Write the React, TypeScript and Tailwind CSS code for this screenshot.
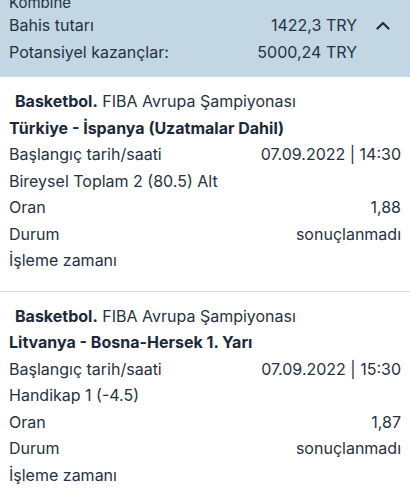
import React from 'react';

type Bet = {
  league: string;
  match: string;
  start: string;
  market: string;
  odds: string;
  status: string;
};

const bets: Bet[] = [
  {
    league: 'FIBA Avrupa Şampiyonası',
    match: 'Türkiye - İspanya (Uzatmalar Dahil)',
    start: '07.09.2022 | 14:30',
    market: 'Bireysel Toplam 2 (80.5) Alt',
    odds: '1,88',
    status: 'sonuçlanmadı',
  },
  {
    league: 'FIBA Avrupa Şampiyonası',
    match: 'Litvanya - Bosna-Hersek 1. Yarı',
    start: '07.09.2022 | 15:30',
    market: 'Handikap 1 (-4.5)',
    odds: '1,87',
    status: 'sonuçlanmadı',
  },
];

function Row({ label, value }: { label: string; value?: string }) {
  return (
    <div className="flex justify-between h-[26.5px] leading-[26.5px]">
      <span>{label}</span>
      {value && <span>{value}</span>}
    </div>
  );
}

function BetCard({ bet, first }: { bet: Bet; first?: boolean }) {
  return (
    <div className={first ? 'pt-[11px] pb-[17px] px-[9px] border-b border-[#d3dee6]' : 'pt-[11px] pb-4 px-[9px]'}>
      <div className="h-[26.5px] leading-[26.5px] pl-[6px]">
        <span className="font-bold text-[#1b2a3a]">Basketbol.</span> {bet.league}
      </div>
      <div className="h-[26.5px] leading-[26.5px] font-bold text-[#1b2a3a]">{bet.match}</div>
      <Row label="Başlangıç tarih/saati" value={bet.start} />
      <Row label={bet.market} />
      <Row label="Oran" value={bet.odds} />
      <Row label="Durum" value={bet.status} />
      <Row label="İşleme zamanı" />
    </div>
  );
}

export default function App() {
  return (
    <div className="w-[410px] h-[500px] overflow-hidden bg-white text-[16px] text-[#253241] font-['Inter',sans-serif]">
      {/* summary header */}
      <div className="bg-[#c3d6e3] h-[77px] px-[9px] pt-[12px]">
        <div className="-mt-[19px] h-[19px] leading-[19px] text-[15px]">Kombine</div>
        <div className="flex items-center h-[27px] leading-[27px]">
          <span className="flex-1">Bahis tutarı</span>
          <span className="w-[110px] text-right">1422,3 TRY</span>
          <svg className="ml-[19px] mr-[11px]" width="14" height="9" viewBox="0 0 14 9" fill="none">
            <path d="M1.5 7.5L7 2l5.5 5.5" stroke="#1f2d3d" strokeWidth="2.2" strokeLinecap="round" strokeLinejoin="round" />
          </svg>
        </div>
        <div className="flex items-center h-[27px] leading-[27px]">
          <span className="flex-1">Potansiyel kazançlar:</span>
          <span className="w-[110px] text-right mr-[44px]">5000,24 TRY</span>
        </div>
      </div>

      {bets.map((b, i) => (
        <BetCard key={i} bet={b} first={i === 0} />
      ))}
    </div>
  );
}
